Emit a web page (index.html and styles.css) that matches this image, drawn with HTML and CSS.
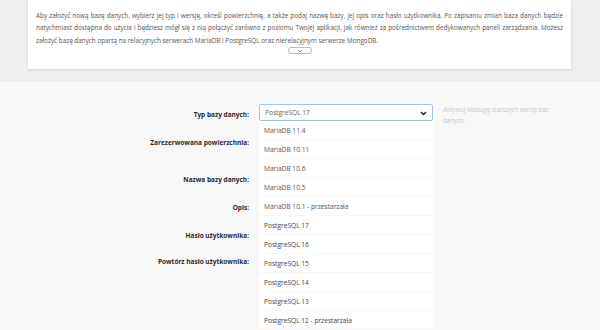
FILE: index.html
```html
<!DOCTYPE html>
<html>
  <head>
    <title>Nowa baza danych</title>
    <link rel="stylesheet" href="styles.css">
  </head>
  <body>
    <div class="intro">
      <p>
        Aby założyć nową bazę danych, wybierz jej typ i wersję, określ powierzchnię, a także podaj nazwę bazy, jej opis oraz hasło użytkownika. Po zapisaniu zmian baza danych będzie natychmiast dostępna do użycia i będziesz mógł się z nią połączyć zarówno z poziomu Twojej aplikacji, jak również za pośrednictwem dedykowanych paneli zarządzania. Możesz założyć bazę danych opartą na relacyjnych serwerach MariaDB i PostgreSQL oraz nierelacyjnym serwerze MongoDB.
      </p>
      <button class="more-btn">
        <svg width="6" height="4" viewBox="0 0 6 4"><path d="M1 1l2 2 2-2" fill="none" stroke="#777" stroke-width="0.8"/></svg>
      </button>
    </div>

    <div class="form-panel">
      <div class="form-row row-type">
        <label>Typ bazy danych:</label>
        <div class="field">
          <div class="select open">
            <span>PostgreSQL 17</span>
            <svg class="caret" width="7" height="5" viewBox="0 0 7 5"><path d="M1 1l2.5 2.5L6 1" fill="none" stroke="#222" stroke-width="1.4"/></svg>
            <ul class="options">
              <li>MariaDB 11.4</li>
              <li>MariaDB 10.11</li>
              <li>MariaDB 10.6</li>
              <li>MariaDB 10.5</li>
              <li>MariaDB 10.1 - przestarzała</li>
              <li class="active">PostgreSQL 17</li>
              <li class="active">PostgreSQL 16</li>
              <li class="active">PostgreSQL 15</li>
              <li class="active">PostgreSQL 14</li>
              <li class="active">PostgreSQL 13</li>
              <li class="active">PostgreSQL 12 - przestarzała</li>
            </ul>
          </div>
        </div>
        <div class="help">Aktywuj obsługę starszych wersji baz danych.</div>
      </div>

      <div class="form-row row-size">
        <label>Zarezerwowana powierzchnia:</label>
        <div class="field"><input type="text"></div>
      </div>

      <div class="form-row">
        <label>Nazwa bazy danych:</label>
        <div class="field"><input type="text"></div>
      </div>

      <div class="form-row">
        <label>Opis:</label>
        <div class="field"><input type="text"></div>
      </div>

      <div class="form-row row-short">
        <label>Hasło użytkownika:</label>
        <div class="field"><input type="password"></div>
      </div>

      <div class="form-row">
        <label>Powtórz hasło użytkownika:</label>
        <div class="field"><input type="password"></div>
      </div>
    </div>
  </body>
</html>
```

FILE: styles.css
```css
:root {
  --page: #efefef;
  --panel: #f8f8f8;
  --text: #444;
  --label: #2a2a2a;
  --muted: #c9c9c9;
  --option: #555;
  --focus: #9fc4e6;
}

body {
  margin: 0;
  height: 330px;
  overflow: hidden;
  background-color: var(--page);
  font-family: "Open Sans", "Noto Sans", sans-serif;
  color: var(--text);
}

.intro {
  margin: 0 29px 0 28px;
  height: 69px;
  box-sizing: border-box;
  padding: 10px 8px 0 8px;
  background-color: #fff;
  box-shadow: 0 1px 3px rgba(0, 0, 0, 0.12);
}

.intro p {
  margin: 0;
  font-size: 6.35px;
  line-height: 12.4px;
  text-align: justify;
  color: #555;
}

.more-btn {
  display: flex;
  align-items: center;
  justify-content: center;
  width: 24px;
  height: 7px;
  margin: 0 auto;
  padding: 0;
  border: 1px solid #bbb;
  border-radius: 3px;
  background-color: #fff;
}

.form-panel {
  margin-top: 13px;
  height: 248px;
  padding-top: 22px;
  box-sizing: border-box;
  background-color: var(--panel);
}

.form-row {
  display: grid;
  grid-template-columns: 249px 174px 1fr;
  column-gap: 10px;
  height: 28px;
}

.row-size {
  height: 37px;
}

.row-short {
  height: 26px;
}

.form-row label {
  text-align: right;
  font-size: 6.5px;
  font-weight: 700;
  line-height: 10px;
  padding-top: 6px;
  color: var(--label);
}

.field input {
  width: 100%;
  height: 17px;
  box-sizing: border-box;
  border: 1px solid #ddd;
  background-color: #fff;
}

.select {
  position: relative;
  height: 17px;
  box-sizing: border-box;
  display: flex;
  align-items: center;
  justify-content: space-between;
  padding: 0 5px 0 5px;
  border: 1px solid var(--focus);
  border-radius: 2px;
  background-color: #fff;
  font-size: 6.6px;
  color: #666;
}

.caret {
  margin-top: 1px;
}

.options {
  position: absolute;
  top: 16px;
  left: -1px;
  right: -1px;
  margin: 0;
  padding: 0;
  list-style: none;
  background-color: #fff;
  z-index: 2;
}

.options li {
  height: 19px;
  line-height: 19px;
  padding-left: 5px;
  border-bottom: 1px solid #f6f6f6;
  box-sizing: border-box;
  font-size: 6.6px;
  color: var(--option);
}

.options li.active {
  color: #444;
}

.help {
  font-size: 6.2px;
  line-height: 11px;
  color: var(--muted);
  width: 120px;
  padding-top: 0;
}
```
